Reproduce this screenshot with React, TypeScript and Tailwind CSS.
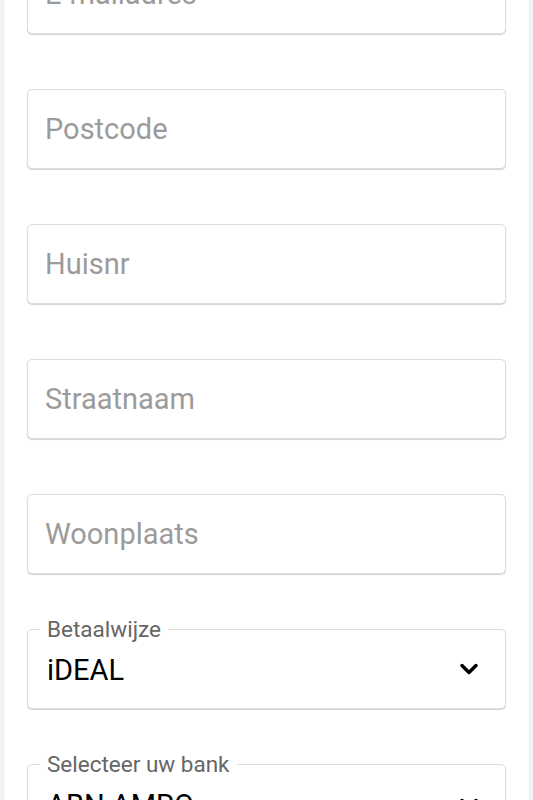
import { ChevronDown } from 'lucide-react';

const font = { fontFamily: 'Roboto, "Noto Sans", Arial, sans-serif' };

function TextField({ placeholder }: { placeholder: string }) {
  return (
    <div className="h-[80px] rounded-[5px] border border-[#dcdcdc] shadow-[0_1px_1px_rgba(0,0,0,0.18)] bg-white flex items-center px-[17px]">
      <span className="text-[29px] text-[#9b9b9b] leading-none">{placeholder}</span>
    </div>
  );
}

function SelectField({ label, value }: { label: string; value: string }) {
  return (
    <div className="relative h-[80px] rounded-[5px] border border-[#dcdcdc] shadow-[0_1px_1px_rgba(0,0,0,0.18)] bg-white flex items-center justify-between pl-[19px] pr-[22px]">
      <span className="absolute -top-[14px] left-[12px] px-[7px] bg-white text-[22.5px] leading-[26px] text-[#666]">
        {label}
      </span>
      <span className="text-[29px] text-black leading-none pt-[2px]">{value}</span>
      <ChevronDown size={28} strokeWidth={3} className="text-black" />
    </div>
  );
}

export default function App() {
  return (
    <div className="h-[800px] overflow-hidden bg-[#f4f4f4] px-[3px]" style={font}>
      <div className="h-[900px] -mt-[46px] bg-white border-l border-r border-[#ececec] px-[23px]">
        <div className="flex flex-col gap-[55px]">
          <TextField placeholder="E-mailadres" />
          <TextField placeholder="Postcode" />
          <TextField placeholder="Huisnr" />
          <TextField placeholder="Straatnaam" />
          <TextField placeholder="Woonplaats" />
          <SelectField label="Betaalwijze" value="iDEAL" />
          <SelectField label="Selecteer uw bank" value="ABN AMRO" />
        </div>
      </div>
    </div>
  );
}
